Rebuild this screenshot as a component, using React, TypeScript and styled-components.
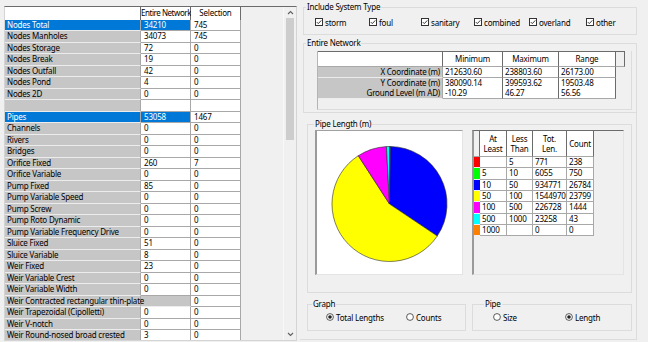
import React from "react";
import styled, { createGlobalStyle } from "styled-components";

const GlobalStyle = createGlobalStyle`
  html, body {
    margin: 0;
    padding: 0;
    background: #f0f0f0;
  }
  body {
    font-family: "Noto Sans", "Open Sans", sans-serif;
    font-size: 8px;
    letter-spacing: -0.2px;
    color: #000;
  }
  * {
    box-sizing: border-box;
  }
`;

const Page = styled.div`
  display: flex;
  width: 648px;
  height: 342px;
  overflow: hidden;
`;

/* ---------- left grid ---------- */

const LeftPane = styled.div`
  width: 300px;
  flex: none;
  padding: 6px 3px 0 4px;
`;

const GridBox = styled.div`
  display: flex;
  height: 335px;
  border-top: 1px solid #6b6b6b;
  border-left: 1px solid #d4d4d4;
  border-right: 1px solid #d4d4d4;
  border-bottom: 1px solid #d4d4d4;
`;

const GridBody = styled.div`
  flex: 1;
  overflow: hidden;
`;

const GridRow = styled.div<{ $h: number }>`
  display: grid;
  grid-template-columns: 136px 50px 50px;
  height: ${({ $h }) => $h}px;
`;

const HeadCell = styled.div<{ $tight?: boolean }>`
  background: #fff;
  border-right: 1px solid #6b6b6b;
  text-align: center;
  line-height: 12px;
  white-space: nowrap;
  letter-spacing: ${({ $tight }) => ($tight ? "-0.45px" : "-0.2px")};
`;

const LabelCell = styled.div<{ $sel?: boolean }>`
  position: relative;
  z-index: 1;
  background: ${({ $sel }) => ($sel ? "#0078d7" : "#c6c6c6")};
  color: ${({ $sel }) => ($sel ? "#fff" : "#000")};
  border-bottom: 1px solid #ececec;
  border-right: 1px solid #a8a8a8;
  padding-left: 2px;
  line-height: 10.5px;
  white-space: nowrap;
`;

const DataCell = styled.div<{ $sel?: boolean; $gray?: boolean }>`
  background: ${({ $sel, $gray }) =>
    $sel ? "#0078d7" : $gray ? "#c6c6c6" : "#fff"};
  color: ${({ $sel }) => ($sel ? "#fff" : "#000")};
  border-right: 1px solid #a8a8a8;
  border-bottom: 1px solid ${({ $gray }) => ($gray ? "#ececec" : "#a8a8a8")};
  padding-left: 3px;
  line-height: 10.5px;
  white-space: nowrap;
`;

const ScrollBar = styled.div`
  width: 13px;
  flex: none;
  display: flex;
  flex-direction: column;
  align-items: center;
  background: #f0f0f0;
  border-left: 1px solid #f8f8f8;
`;

const Arrow = styled.div`
  height: 11px;
  display: flex;
  align-items: center;
  justify-content: center;
`;

const Thumb = styled.div`
  width: 8px;
  height: 122px;
  background: #cdcdcd;
`;

const Track = styled.div`
  flex: 1;
`;

/* ---------- right column ---------- */

const RightPane = styled.div`
  width: 337px;
  flex: none;
  padding-left: 3px;
  display: flex;
  flex-direction: column;
`;

const Group = styled.fieldset<{ $pad: string; $top?: number; $w?: number }>`
  margin: ${({ $top }) => $top ?? 0}px 0 0 0;
  padding: ${({ $pad }) => $pad};
  border: 1px solid #dcdcdc;
  min-width: 0;
  width: ${({ $w }) => ($w ? `${$w}px` : "auto")};
  flex: ${({ $w }) => ($w ? "none" : "1")};
`;

const Caption = styled.legend<{ $indent: number }>`
  margin-left: ${({ $indent }) => $indent}px;
  padding: 0 1px;
  line-height: 10px;
  color: #000;
`;

const CheckRow = styled.div`
  display: flex;
  align-items: center;
  height: 20px;
  padding-left: 11px;
`;

const CheckItem = styled.label<{ $w?: number }>`
  display: flex;
  align-items: center;
  gap: 2px;
  width: ${({ $w }) => ($w ? `${$w}px` : "auto")};
`;

const NetBox = styled.div`
  height: 59px;
  margin: 3px 0 0 13px;
  background: #f0f0f0;
  border-left: 1px solid #b4b4b4;
  border-right: 1px solid #dcdcdc;
  border-bottom: 1px solid #dcdcdc;
`;

const NetRow = styled.div<{ $h: number; $head?: boolean }>`
  display: grid;
  grid-template-columns: 125px 60px 56px 57px 9px;
  height: ${({ $h }) => $h}px;
  width: 307px;
  border-top: ${({ $head }) => ($head ? "1px solid #6b6b6b" : "none")};
`;

const NetHead = styled.div<{ $blank?: boolean }>`
  background: ${({ $blank }) => ($blank ? "#f0f0f0" : "#fff")};
  border-right: 1px solid #6b6b6b;
  border-bottom: 1px solid #a8a8a8;
  text-align: center;
  line-height: 14px;
`;

const NetLabel = styled.div`
  background: #c6c6c6;
  border-bottom: 1px solid #ececec;
  border-right: 1px solid #a8a8a8;
  text-align: right;
  padding-right: 2px;
  line-height: 10px;
  white-space: nowrap;
`;

const NetCell = styled.div`
  background: #fff;
  border-bottom: 1px solid #a8a8a8;
  border-right: 1px solid #6b6b6b;
  padding-left: 2px;
  line-height: 10px;
`;

const LowerPanel = styled.div`
  flex: 1;
  margin-left: -3px;
  padding: 0 4px 8px 7px;
  border-right: 1px solid #dcdcdc;
  border-bottom: 1px solid #dcdcdc;
  margin-bottom: 2px;
`;

const ChartRow = styled.div`
  display: flex;
  gap: 9px;
  padding-left: 7px;
`;

const PiePanel = styled.div`
  width: 148px;
  height: 145px;
  background: #fff;
  border-left: 2px solid #9a9a9a;
  border-top: 1px solid #a0a0a0;
  border-right: 1px solid #e4e4e4;
  border-bottom: 1px solid #e4e4e4;
`;

const LegendBox = styled.div`
  width: 152px;
  height: 145px;
  background: #f0f0f0;
  border-left: 2px solid #9a9a9a;
  border-top: 1px solid #6b6b6b;
  border-right: 1px solid #e4e4e4;
  border-bottom: 1px solid #e4e4e4;
`;

const LegendRow = styled.div<{ $h: number }>`
  display: grid;
  grid-template-columns: 6px 27px 26px 34px 27px;
  height: ${({ $h }) => $h}px;
`;

const LegendHead = styled.div<{ $blank?: boolean }>`
  background: ${({ $blank }) => ($blank ? "#f0f0f0" : "#fff")};
  border-right: 1px solid #6b6b6b;
  border-bottom: 1px solid #a8a8a8;
  display: flex;
  align-items: center;
  justify-content: center;
  text-align: center;
  line-height: 10px;
`;

const Swatch = styled.div<{ $c: string }>`
  background: ${({ $c }) => $c};
  border-bottom: 1px solid #f0f0f0;
`;

const LegendCell = styled.div`
  background: #fff;
  border-right: 1px solid #a8a8a8;
  border-bottom: 1px solid #a8a8a8;
  padding-left: 2px;
  line-height: 10.3px;
  white-space: nowrap;
`;

const OptionRow = styled.div`
  display: flex;
  gap: 6px;
  margin-top: 6px;
`;

const RadioRow = styled.div<{ $indent: number }>`
  display: flex;
  align-items: center;
  height: 16px;
  padding-left: ${({ $indent }) => $indent}px;
`;

const RadioItem = styled.label<{ $w?: number }>`
  display: flex;
  align-items: center;
  gap: 2px;
  width: ${({ $w }) => ($w ? `${$w}px` : "auto")};
`;

/* ---------- data ---------- */

type GridLine = { name: string; en: string; sel: string; hi?: boolean; wide?: boolean };

const gridLines: GridLine[] = [
  { name: "Nodes Total", en: "34210", sel: "745", hi: true },
  { name: "Nodes Manholes", en: "34073", sel: "745" },
  { name: "Nodes Storage", en: "72", sel: "0" },
  { name: "Nodes Break", en: "19", sel: "0" },
  { name: "Nodes Outfall", en: "42", sel: "0" },
  { name: "Nodes Pond", en: "4", sel: "0" },
  { name: "Nodes 2D", en: "0", sel: "0" },
  { name: "", en: "", sel: "" },
  { name: "Pipes", en: "53058", sel: "1467", hi: true },
  { name: "Channels", en: "0", sel: "0" },
  { name: "Rivers", en: "0", sel: "0" },
  { name: "Bridges", en: "0", sel: "0" },
  { name: "Orifice Fixed", en: "260", sel: "7" },
  { name: "Orifice Variable", en: "0", sel: "0" },
  { name: "Pump Fixed", en: "85", sel: "0" },
  { name: "Pump Variable Speed", en: "0", sel: "0" },
  { name: "Pump Screw", en: "0", sel: "0" },
  { name: "Pump Roto Dynamic", en: "0", sel: "0" },
  { name: "Pump Variable Frequency Drive", en: "0", sel: "0" },
  { name: "Sluice Fixed", en: "51", sel: "0" },
  { name: "Sluice Variable", en: "8", sel: "0" },
  { name: "Weir Fixed", en: "23", sel: "0" },
  { name: "Weir Variable Crest", en: "0", sel: "0" },
  { name: "Weir Variable Width", en: "0", sel: "0" },
  { name: "Weir Contracted rectangular thin-plate", en: "", sel: "0", wide: true },
  { name: "Weir Trapezoidal (Cipolletti)", en: "0", sel: "0" },
  { name: "Weir V-notch", en: "0", sel: "0" },
  { name: "Weir Round-nosed broad crested", en: "3", sel: "0" },
];

const systems = [
  { name: "storm", w: 54 },
  { name: "foul", w: 52 },
  { name: "sanitary", w: 53 },
  { name: "combined", w: 55 },
  { name: "overland", w: 57 },
  { name: "other" },
];

const extents = [
  ["X Coordinate (m)", "212630.60", "238803.60", "26173.00"],
  ["Y Coordinate (m)", "380090.14", "399593.62", "19503.48"],
  ["Ground Level (m AD)", "-10.29", "46.27", "56.56"],
];

const bands = [
  { color: "#ff0000", least: "", less: "5", len: 771, count: "238" },
  { color: "#00ff00", least: "5", less: "10", len: 6055, count: "750" },
  { color: "#0000ff", least: "10", less: "50", len: 934771, count: "26784" },
  { color: "#ffff00", least: "50", less: "100", len: 1544970, count: "23799" },
  { color: "#ff00ff", least: "100", less: "500", len: 226728, count: "1444" },
  { color: "#00ffff", least: "500", less: "1000", len: 23258, count: "43" },
  { color: "#ff8000", least: "1000", less: "", len: 0, count: "0" },
];

/* ---------- small drawings ---------- */

function CheckBox() {
  return (
    <svg width="8" height="8" viewBox="0 0 8 8">
      <rect x="0.5" y="0.5" width="7" height="7" fill="#fff" stroke="#333" />
      <polyline points="1.8,4.1 3.3,5.6 6.3,2.4" fill="none" stroke="#222" strokeWidth="0.9" />
    </svg>
  );
}

function Radio({ on }: { on?: boolean }) {
  return (
    <svg width="8" height="8" viewBox="0 0 8 8">
      <circle cx="4" cy="4" r="3.4" fill="#fff" stroke="#333" strokeWidth="0.8" />
      {on && <circle cx="4" cy="4" r="1.8" fill="#222" />}
    </svg>
  );
}

function Chevron({ down }: { down?: boolean }) {
  return (
    <svg width="7" height="5" viewBox="0 0 7 5">
      <polyline
        points={down ? "1,1 3.5,3.5 6,1" : "1,4 3.5,1.5 6,4"}
        fill="none"
        stroke="#606060"
        strokeWidth="1.1"
      />
    </svg>
  );
}

function PieChart() {
  const cx = 72.5;
  const cy = 73;
  const r = 57.5;
  const total = bands.reduce((s, b) => s + b.len, 0);
  let start = 0;
  const pt = (deg: number) => {
    const t = (deg * Math.PI) / 180;
    return `${cx + r * Math.sin(t)},${cy - r * Math.cos(t)}`;
  };
  const slices = bands
    .filter((b) => b.len > 0)
    .map((b) => {
      const sweep = (b.len / total) * 360;
      const end = start + sweep;
      const d = `M${cx},${cy} L${pt(start)} A${r},${r} 0 ${sweep > 180 ? 1 : 0} 1 ${pt(end)} Z`;
      start = end;
      return <path key={b.color} d={d} fill={b.color} stroke="#2a2a2a" strokeWidth="0.6" />;
    });
  return (
    <svg width="145" height="143" viewBox="0 0 145 143">
      {slices}
    </svg>
  );
}

/* ---------- page ---------- */

export default function App() {
  return (
    <>
      <GlobalStyle />
      <Page>
        <LeftPane>
          <GridBox>
            <GridBody>
              <GridRow $h={12.5}>
                <HeadCell />
                <HeadCell $tight>Entire Network</HeadCell>
                <HeadCell>Selection</HeadCell>
              </GridRow>
              {gridLines.map((g, i) => (
                <GridRow key={i} $h={11.5}>
                  <LabelCell $sel={g.hi}>{g.name}</LabelCell>
                  <DataCell $sel={g.hi} $gray={g.wide}>
                    {g.en}
                  </DataCell>
                  <DataCell>{g.sel}</DataCell>
                </GridRow>
              ))}
            </GridBody>
            <ScrollBar>
              <Arrow>
                <Chevron />
              </Arrow>
              <Thumb />
              <Track />
              <Arrow>
                <Chevron down />
              </Arrow>
            </ScrollBar>
          </GridBox>
        </LeftPane>

        <RightPane>
          <Group $pad="0" $top={2}>
            <Caption $indent={2}>Include System Type</Caption>
            <CheckRow>
              {systems.map((s) => (
                <CheckItem key={s.name} $w={s.w}>
                  <CheckBox />
                  {s.name}
                </CheckItem>
              ))}
            </CheckRow>
          </Group>

          <Group $pad="0 4px 2px 0" $top={3}>
            <Caption $indent={2}>Entire Network</Caption>
            <NetBox>
              <NetRow $h={16} $head>
                <NetHead />
                <NetHead>Minimum</NetHead>
                <NetHead>Maximum</NetHead>
                <NetHead>Range</NetHead>
                <NetHead $blank />
              </NetRow>
              {extents.map((e) => (
                <NetRow key={e[0]} $h={10.67}>
                  <NetLabel>{e[0]}</NetLabel>
                  <NetCell>{e[1]}</NetCell>
                  <NetCell>{e[2]}</NetCell>
                  <NetCell>{e[3]}</NetCell>
                </NetRow>
              ))}
            </NetBox>
          </Group>

          <LowerPanel>
            <Group $pad="1px 7px 17px 0" $top={6}>
              <Caption $indent={6}>Pipe Length (m)</Caption>
              <ChartRow>
                <PiePanel>
                  <PieChart />
                </PiePanel>
                <LegendBox>
                  <LegendRow $h={26}>
                    <LegendHead $blank />
                    <LegendHead>
                      At
                      <br />
                      Least
                    </LegendHead>
                    <LegendHead>
                      Less
                      <br />
                      Than
                    </LegendHead>
                    <LegendHead>
                      Tot.
                      <br />
                      Len.
                    </LegendHead>
                    <LegendHead>Count</LegendHead>
                  </LegendRow>
                  {bands.map((b) => (
                    <LegendRow key={b.color} $h={11.35}>
                      <Swatch $c={b.color} />
                      <LegendCell>{b.least}</LegendCell>
                      <LegendCell>{b.less}</LegendCell>
                      <LegendCell>{b.len}</LegendCell>
                      <LegendCell>{b.count}</LegendCell>
                    </LegendRow>
                  ))}
                </LegendBox>
              </ChartRow>
            </Group>

            <OptionRow>
              <Group $pad="0 0 5px 0" $w={159}>
                <Caption $indent={4}>Graph</Caption>
                <RadioRow $indent={18}>
                  <RadioItem $w={80}>
                    <Radio on />
                    Total Lengths
                  </RadioItem>
                  <RadioItem>
                    <Radio />
                    Counts
                  </RadioItem>
                </RadioRow>
              </Group>
              <Group $pad="0 0 5px 0">
                <Caption $indent={11}>Pipe</Caption>
                <RadioRow $indent={20}>
                  <RadioItem $w={72}>
                    <Radio />
                    Size
                  </RadioItem>
                  <RadioItem>
                    <Radio on />
                    Length
                  </RadioItem>
                </RadioRow>
              </Group>
            </OptionRow>
          </LowerPanel>
        </RightPane>
      </Page>
    </>
  );
}
